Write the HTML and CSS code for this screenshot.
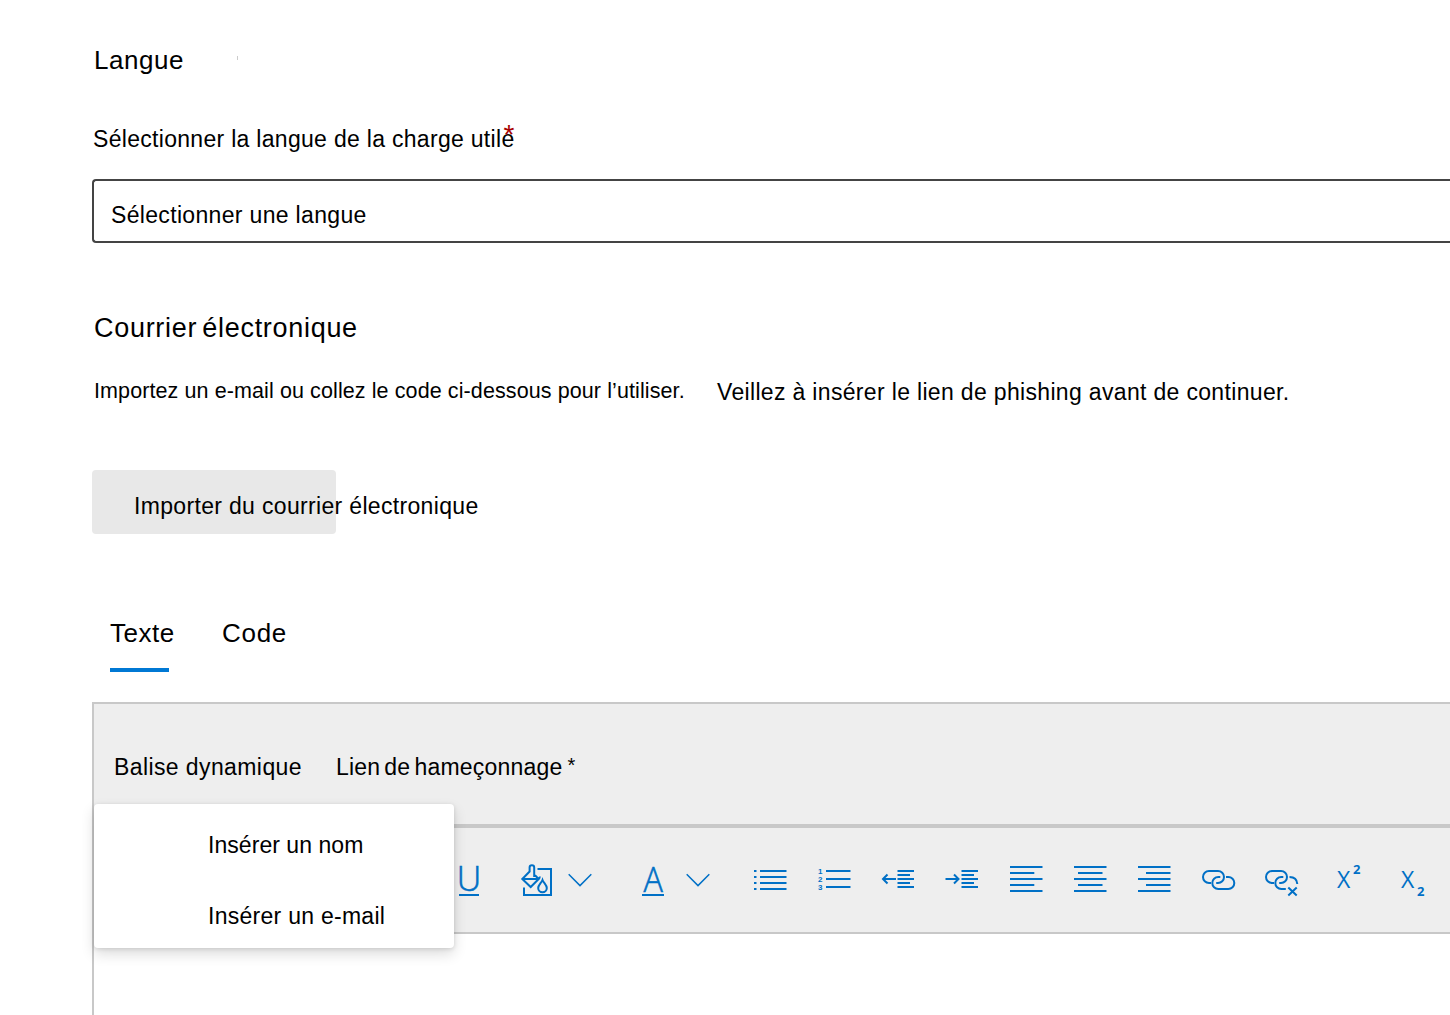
FILE: index.html
```html
<!DOCTYPE html>
<html lang="fr">
<head>
<meta charset="utf-8">
<title>Langue et courrier électronique</title>
<link rel="stylesheet" href="styles.css">
</head>
<body>
<main class="page">
  <h2 class="title">Langue<span class="tick"></span></h2>
  <div class="label"><span class="label-text">Sélectionner la langue de la charge utile<span class="required">*</span></span></div>
  <div class="select">Sélectionner une langue</div>

  <h2 class="title title-mail">Courrier électronique</h2>
  <div class="hints">
    <span class="hint-import">Importez un e-mail ou collez le code ci-dessous pour l’utiliser.</span>
    <span class="hint-link">Veillez à insérer le lien de phishing avant de continuer.</span>
  </div>
  <div class="import-button">Importer du courrier électronique</div>

  <nav class="tabs">
    <span class="tab tab-active">Texte</span>
    <span class="tab tab-code">Code</span>
  </nav>

  <section class="editor">
    <div class="tags">
      <span class="tag-dynamic">Balise dynamique</span>
      <span class="tag-link">Lien de hameçonnage<span class="star">*</span></span>
    </div>
    <div class="toolbar">
      <svg class="icon icon-u" viewBox="0 0 32 40"><text class="glyph glyph-u" x="16" y="31" text-anchor="middle">U</text><path d="M6 35h20"/></svg>
      <svg class="icon icon-fill" viewBox="0 0 32 40"><path d="M16.500 9h13.500v26H3V27.500"/><path d="M13.200 17V7.500a2.300 2.300 0 0 0-4.600 0V11.500L1.300 19 9.700 27l8-8L14 15.200M1.300 19h16.400c1-.8 1.300-1.500.8-2.500"/><path d="M21.500 20c-1 2.700-4.300 5-4.300 8a4.300 4.300 0 0 0 8.600 0c0-3-3.300-5.300-4.300-8z"/></svg>
      <svg class="icon icon-chevron" viewBox="0 0 24 40"><path d="M.7 14.300 12 25.600 23.300 14.300"/></svg>
      <svg class="icon icon-a" viewBox="0 0 32 40"><text class="glyph glyph-a" x="17.500" y="31.500" text-anchor="middle" transform="scale(.92 1)">A</text><path d="M5 35h22"/></svg>
      <svg class="icon icon-chevron chevron-a" viewBox="0 0 24 40"><path d="M.7 14.300 12 25.600 23.300 14.300"/></svg>
      <div class="tools">
        <svg class="tool" viewBox="0 0 34 40"><path d="M7 11h26.500M7 17h26.500M7 23h26.500M7 29h26.500"/><path d="M1 11h2.500M1 17h2.500M1 23h2.500M1 29h2.500"/></svg>
        <svg class="tool" viewBox="0 0 34 40"><path d="M9 11h24.500M9 19h24.500M9 27h24.500"/><text class="digit" x="1" y="14">1</text><text class="digit" x="1" y="22">2</text><text class="digit" x="1" y="30">3</text></svg>
        <svg class="tool" viewBox="0 0 34 40"><path d="M16.500 11h16.500M16.500 15h12.500M16.500 19h16.500M16.500 23h12.500M16.500 27h16.500M15 19H2M6.500 14.500 2 19l4.500 4.500"/></svg>
        <svg class="tool" viewBox="0 0 34 40"><path d="M16.500 11h16.500M16.500 15h12.500M16.500 19h16.500M16.500 23h12.500M16.500 27h16.500M.5 19h13M9 14.500l4.500 4.500L9 23.500"/></svg>
        <svg class="tool" viewBox="-.5 0 34 40"><path d="M.5 7H33M.5 13h24.300M.5 19H33M.5 25h24.300M.5 31H33"/></svg>
        <svg class="tool" viewBox="-.5 0 34 40"><path d="M.5 7H33M4.500 13H29M.5 19H33M4.500 25H29M.5 31H33"/></svg>
        <svg class="tool" viewBox="-.5 0 34 40"><path d="M.5 7H33M8.500 13H33M.5 19H33M8.500 25H33M.5 31H33"/></svg>
        <svg class="tool" viewBox="-.5 0 34 40"><path d="M9.500 23H7.500A6 6 0 0 1 7.500 11h9A6 6 0 0 1 16.500 23h-1.800"/><path d="M18.800 17h-2a6 6 0 0 0 0 12h10a6 6 0 0 0 0-12h-2.300"/></svg>
        <svg class="tool" viewBox="-.5 0 34 40"><path d="M8.500 23H6.500A6 6 0 0 1 6.500 11h9A6 6 0 0 1 15.500 23h-1.800"/><path d="M17.800 17h-2a6 6 0 0 0 0 12h4.500M24 17c4.500 0 7.500 2.500 7.800 7M22.800 27.500l8.400 8M31.200 27.500l-8.400 8"/></svg>
        <svg class="tool" viewBox="0 0 34 40"><text class="glyph glyph-x" x="8" y="28">X</text><text class="script" x="24" y="14">2</text></svg>
        <svg class="tool" viewBox="0 0 34 40"><text class="glyph glyph-x" x="8" y="28">X</text><text class="script" x="24" y="35.500">2</text></svg>
      </div>
    </div>
    <div class="menu">
      <div class="menu-item item-name">Insérer un nom</div>
      <div class="menu-item item-mail">Insérer un e-mail</div>
    </div>
  </section>
</main>
</body>
</html>
```
FILE: styles.css
```css
* { box-sizing: border-box; }
body {
  margin: 0;
  background: #fff;
  color: #000;
  font: 23px/40px "Liberation Sans", Arial, sans-serif;
  letter-spacing: .33px;
  white-space: nowrap;
}
.page {
  height: 1015px;
  padding: 40px 0 0 92px;
  overflow: hidden;
  display: flex;
  flex-direction: column;
}
.title {
  margin: 0;
  padding-left: 2px;
  height: 40px;
  font-size: 26px;
  font-weight: 400;
  letter-spacing: .55px;
  display: flex;
}
.tick { width: 1px; height: 4px; margin: 16px 0 0 53px; background: #ccc; }
.label { height: 40px; margin-top: 39px; padding-left: 1px; letter-spacing: .3px; }
.label-text { position: relative; }
.required {
  position: absolute;
  right: 0;
  top: -7px;
  font-size: 28px;
  line-height: 32px;
  letter-spacing: 0;
  color: #a80000;
}
.select {
  height: 64px;
  margin-top: 20px;
  padding: 14px 0 0 17px;
  border: 2px solid #444;
  border-right: 0;
  border-radius: 4px 0 0 4px;
}
.title-mail { margin-top: 65px; font-size: 27px; letter-spacing: .7px; word-spacing: -3px; }
.hints { display: flex; height: 40px; margin-top: 23px; padding-left: 2px; }
.hint-import { width: 623px; font-size: 21.500px; letter-spacing: .1px; }
.hint-link { padding-top: 1px; }
.import-button {
  width: 244px;
  height: 64px;
  margin-top: 59px;
  padding: 16px 0 0 42px;
  border-radius: 4px;
  background: #e8e8e8;
}
.tabs { display: flex; gap: 53px; height: 59px; margin: 79px 0 0 18px; font-size: 26px; letter-spacing: .5px; }
.tab-active { width: 59px; border-bottom: 4px solid #0078d4; }
.tab-code { letter-spacing: .7px; }
.editor {
  position: relative;
  flex: 1;
  margin-top: 30px;
  border: 2px solid #c8c8c8;
  border-width: 2px 0 0 2px;
}
.tags { display: flex; height: 120px; padding: 43px 0 0 20px; background: #eee; }
.tag-dynamic { width: 222px; letter-spacing: .4px; }
.tag-link { letter-spacing: .2px; word-spacing: -2.500px; }
.star { margin-left: 5px; font-size: 20px; vertical-align: 3px; line-height: 1; }
.toolbar {
  display: flex;
  height: 110px;
  padding: 32px 0 0 359px;
  border-top: 4px solid #c8c8c8;
  border-bottom: 2px solid #c8c8c8;
  background: #eee;
}
.icon, .tool {
  flex: none;
  width: 32px;
  height: 40px;
  overflow: visible;
  fill: none;
  stroke: #0070c6;
  stroke-width: 2;
}
.icon-fill { margin-left: 36px; }
.icon-chevron { width: 24px; margin-left: 15px; stroke-width: 1.500; }
.icon-a { margin-left: 45px; }
.chevron-a { margin-left: 17px; }
.tools { display: flex; gap: 30px; margin-left: 43px; }
.tool { width: 34px; }
.glyph, .digit, .script { fill: #0070c6; stroke: none; letter-spacing: 0; }
.glyph { font-family: "Open Sans", sans-serif; font-weight: 300; stroke: #0070c6; stroke-width: .6; }
.glyph-u { font-size: 34px; }
.glyph-a { font-size: 35px; }
.glyph-x { font-size: 23px; font-weight: 400; stroke: none; }
.digit { font: 700 8px "Liberation Sans", sans-serif; }
.script { font: 700 13px "Open Sans", sans-serif; }
.menu {
  position: absolute;
  left: 0;
  top: 100px;
  width: 360px;
  height: 144px;
  padding: 21px 0 0 114px;
  border-radius: 4px;
  background: #fff;
  box-shadow: 0 6px 14px rgba(0, 0, 0, .14), 0 1px 4px rgba(0, 0, 0, .12);
}
.item-name { letter-spacing: .05px; }
.item-mail { margin-top: 31px; letter-spacing: .27px; }
```
